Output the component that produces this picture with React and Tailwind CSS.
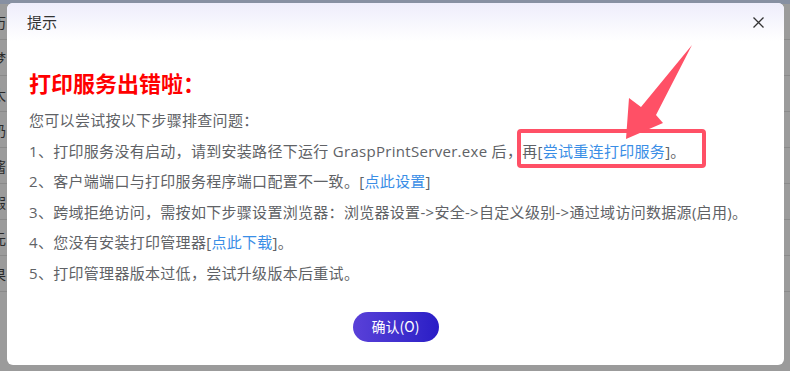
import React from "react";

const font = { fontFamily: '"Noto Sans CJK SC", "Microsoft YaHei", sans-serif' };
const bodyFont = { fontFamily: '"Open Sans", "Noto Sans CJK SC", sans-serif' };

const BgRows = () => {
    const rows = ["历", "梦", "太", "奶", "酱", "假", "元", "果"];
    return (
        <div className="absolute inset-0 bg-[#9b9b9b]">
            <div className="h-[4px] bg-[#8790a2]" />
            {rows.map((r, i) => (
                <div
                    key={i}
                    className="h-[36px] border-b border-[#8a8a8a] text-[14px] leading-[36px] text-[#2a2a2a] -ml-[8px]"
                >
                    {r}
                </div>
            ))}
        </div>
    );
};

export default function App() {
    return (
        <div className="relative w-[790px] h-[371px] overflow-hidden" style={font}>
            <BgRows />

            {/* Dialog */}
            <div className="absolute left-[7px] top-[3px] w-[777px] h-[362px] rounded-[6px] bg-white flex flex-col overflow-hidden">

                {/* Header */}
                <div className="h-[38px] flex items-center justify-between pl-[20px] pr-[16px] bg-gradient-to-b from-[#eeedfb] to-white">
                    <span className="text-[15px] text-[#333]">提示</span>
                    <svg width="13" height="13" viewBox="0 0 13 13" className="mr-[3px]">
                        <path d="M1.5 1.5 L11.5 11.5 M11.5 1.5 L1.5 11.5" stroke="#333" strokeWidth="1.3" fill="none" />
                    </svg>
                </div>

                {/* Body */}
                <div className="pl-[22px] pt-[26px]">
                    <h2 className="text-[22px] leading-[30px] font-bold text-[#ff0000]">打印服务出错啦：</h2>

                    <div className="mt-[8px] text-[15px] leading-[30.6px] tracking-[0.3px] text-[#606266]" style={bodyFont}>
                        <p>您可以尝试按以下步骤排查问题：</p>
                        <p>
                            1、打印服务没有启动，请到安装路径下运行 GraspPrintServer.exe 后，再[<span className="text-[#3a8ee6]">尝试重连打印服务</span>]。
                        </p>
                        <p>
                            2、客户端端口与打印服务程序端口配置不一致。[<span className="text-[#3a8ee6]">点此设置</span>]
                        </p>
                        <p>3、跨域拒绝访问，需按如下步骤设置浏览器：浏览器设置-&gt;安全-&gt;自定义级别-&gt;通过域访问数据源(启用)。</p>
                        <p>
                            4、您没有安装打印管理器[<span className="text-[#3a8ee6]">点此下载</span>]。
                        </p>
                        <p>5、打印管理器版本过低，尝试升级版本后重试。</p>
                    </div>
                </div>

                {/* Footer */}
                <div className="flex justify-center mt-[23px]">
                    <button className="w-[86px] h-[30px] rounded-full bg-gradient-to-r from-[#5a40d8] to-[#2a1cc6] text-white text-[14px]">
                        确认(O)
                    </button>
                </div>
            </div>

            {/* Annotation box */}
            <div className="absolute left-[517px] top-[129px] w-[189px] h-[39px] rounded-[4px] border-[4px] border-[#ff5066]" />

            {/* Annotation arrow */}
            <svg className="absolute left-0 top-0" width="790" height="371" viewBox="0 0 790 371">
                <polygon
                    points="692,45 656,115 663,123 626,139 629,98 641,107"
                    fill="#ff5066"
                />
            </svg>
        </div>
    );
}
